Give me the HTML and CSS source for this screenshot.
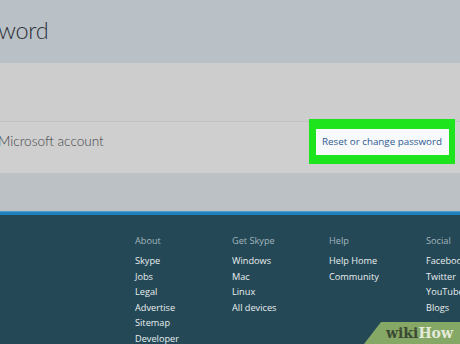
FILE: index.html
```html
<!DOCTYPE html>
<html>
<head>
<meta charset="utf-8">
<link rel="stylesheet" href="styles.css">
</head>
<body>
<div class="page">
  <header class="top">
    <h1 class="title">word</h1>
  </header>
  <div class="band"></div>
  <div class="row">
    <span class="label">Microsoft account</span>
    <div class="highlight">
      <a class="action">Reset or change password</a>
    </div>
  </div>
  <div class="band2"></div>
  <footer class="footer">
    <div class="col">
      <div class="head">About</div>
      <a>Skype</a><a>Jobs</a><a>Legal</a><a>Advertise</a><a>Sitemap</a><a>Developer</a>
    </div>
    <div class="col">
      <div class="head">Get Skype</div>
      <a>Windows</a><a>Mac</a><a>Linux</a><a>All devices</a>
    </div>
    <div class="col">
      <div class="head">Help</div>
      <a>Help Home</a><a>Community</a>
    </div>
    <div class="col">
      <div class="head">Social</div>
      <a>Facebook</a><a>Twitter</a><a>YouTube</a><a>Blogs</a>
    </div>
    <div class="wikihow"><span class="wiki">wiki</span><span class="how">How</span></div>
  </footer>
</div>
</body>
</html>
```
FILE: styles.css
```css
html, body {
  margin: 0;
  padding: 0;
}
body {
  width: 460px;
  height: 344px;
  overflow: hidden;
  font-family: "Open Sans", "Noto Sans", sans-serif;
}
.page {
  display: flex;
  flex-direction: column;
  height: 344px;
}
.page > * {
  flex-shrink: 0;
}
.top {
  height: 63px;
  background: #b9c0c6;
  display: flex;
  align-items: center;
}
.title {
  margin: 0 0 0 -2px;
  font-family: Lato, "Open Sans", sans-serif;
  font-weight: 300;
  font-size: 23.5px;
  color: #2c3136;
  letter-spacing: -0.3px;
  padding-bottom: 3px;
}
.band {
  height: 58px;
  background: #cdcdcd;
  border-bottom: 1px solid #c1c2c2;
}
.row {
  position: relative;
  height: 51px;
  background: #cfcfcf;
  display: flex;
  align-items: center;
}
.label {
  font-family: Lato, "Open Sans", sans-serif;
  font-weight: 300;
  font-size: 13.6px;
  color: #3e4347;
  margin-left: -2px;
  padding-bottom: 13px;
}
.highlight {
  position: absolute;
  left: 309px;
  top: -3px;
  width: 146px;
  height: 45px;
  background: #1ee41e;
  display: flex;
  align-items: center;
  justify-content: center;
}
.action {
  display: flex;
  align-items: center;
  justify-content: center;
  width: 133px;
  height: 26px;
  background: #f7f9fb;
  color: #2f5a93;
  font-size: 9.8px;
  white-space: nowrap;
}
.band2 {
  height: 38px;
  background: #bbc1c5;
}
.footer {
  position: relative;
  flex: 1 0 auto;
  height: 133px;
  box-sizing: border-box;
  overflow: hidden;
  background: #244855;
  border-top: 1px solid #4a9ccc;
  box-shadow: inset 0 3px 0 #1f82bd;
  display: flex;
  padding: 21px 0 0 135px;
}
.col {
  display: flex;
  flex-direction: column;
  width: 97px;
  flex-shrink: 0;
  font-size: 9.2px;
}
.col a {
  color: #e9eef0;
  height: 15.5px;
  line-height: 15.5px;
  flex-shrink: 0;
}
.head {
  color: #a3b6bf;
  height: 20px;
  line-height: 15px;
  flex-shrink: 0;
}
.wikihow {
  position: absolute;
  right: 0;
  bottom: 0;
  width: 96px;
  height: 22px;
  background: #86a866;
  clip-path: polygon(17px 0, 100% 0, 100% 100%, 0 100%);
  font-family: "DejaVu Serif", "Liberation Serif", serif;
  font-weight: bold;
  font-size: 14px;
  line-height: 22px;
  padding-left: 22px;
  box-sizing: border-box;
}
.wiki { color: #3b4a33; }
.how { color: #e3ead9; }
```
